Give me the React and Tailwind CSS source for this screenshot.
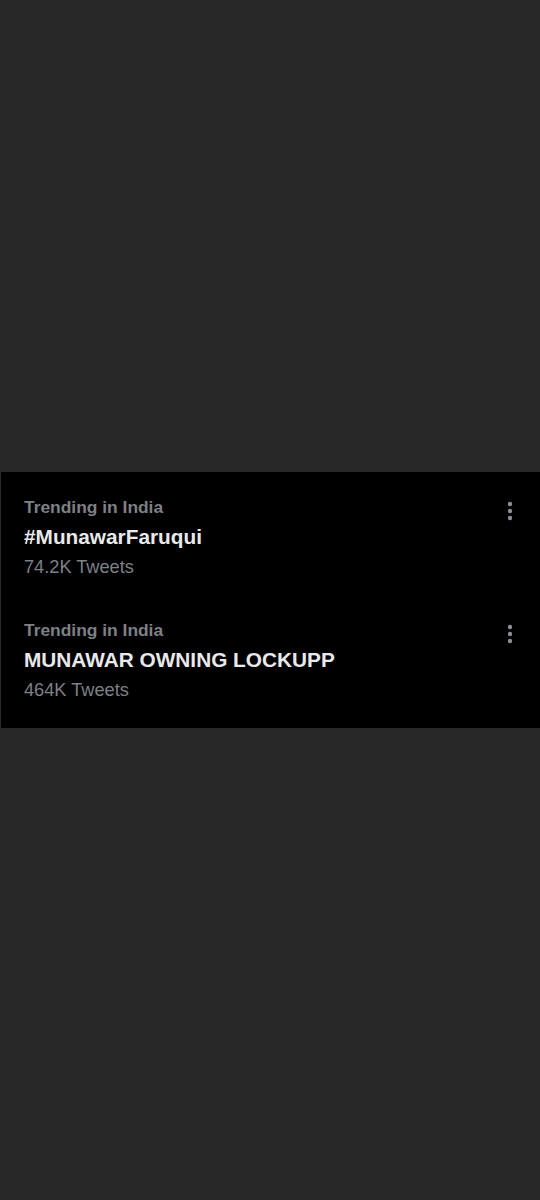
import React from "react";

const trends = [
  { place: "Trending in India", name: "#MunawarFaruqui", count: "74.2K Tweets" },
  { place: "Trending in India", name: "MUNAWAR OWNING LOCKUPP", count: "464K Tweets" },
];

const Dots = () => (
  <svg width="6" height="20" viewBox="0 0 6 20" className="text-[#8b8f93]">
    <circle cx="3" cy="3" r="2.2" fill="currentColor" />
    <circle cx="3" cy="10" r="2.2" fill="currentColor" />
    <circle cx="3" cy="17" r="2.2" fill="currentColor" />
  </svg>
);

const App = () => {
  return (
    <div
      className="min-h-screen bg-[#282828] flex flex-col"
      style={{ fontFamily: "'Liberation Sans', Arial, sans-serif" }}
    >
      <div className="h-[472px]" />
      <div className="h-[256px] bg-black border-l border-[#2a2a2a] pt-[20px]">
        {trends.map((t, i) => (
          <div key={i} className="flex justify-between pl-[23px] pr-[27px] h-[123px]">
            <div className="flex flex-col">
              <span className="text-[17.4px] leading-[30px] font-bold text-[#7d8185]">
                {t.place}
              </span>
              <span className="text-[20.8px] leading-[30px] font-bold text-[#e7e9ea]">
                {t.name}
              </span>
              <span className="text-[18.2px] leading-[30px] text-[#7d8185]">
                {t.count}
              </span>
            </div>
            <div className="pt-[9px]">
              <Dots />
            </div>
          </div>
        ))}
      </div>
    </div>
  );
};

export default App;
